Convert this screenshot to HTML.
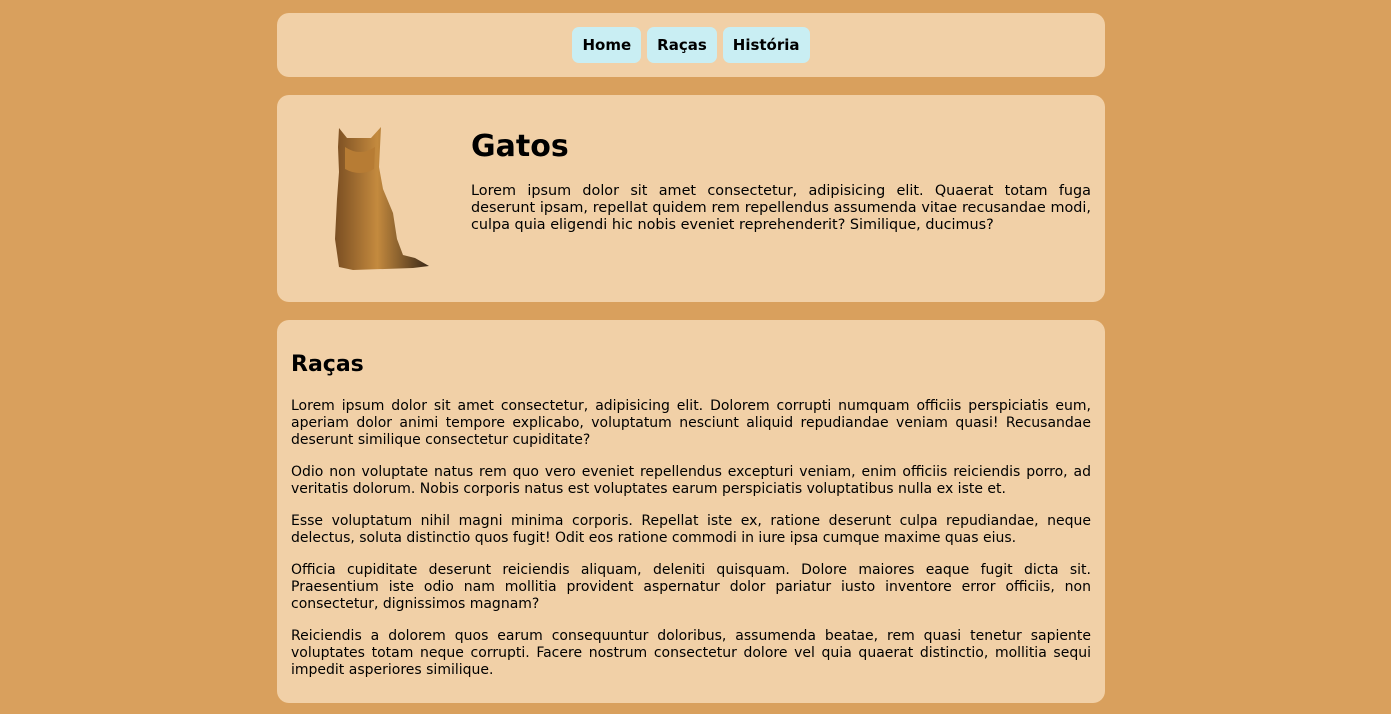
<!DOCTYPE html>
<html><head><meta charset="utf-8"><style>
body{margin:0;background:#d9a05d;font-family:"DejaVu Sans",sans-serif;color:#000;}
.wrap{width:828px;margin-left:277px;padding-top:13px;}
.box{background:#f1d0a7;border-radius:12px;}
nav{height:64px;display:flex;justify-content:center;align-items:center;gap:6px;}
nav a{background:#c9eef3;border-radius:7px;padding:0 10px;height:36px;line-height:37px;font-weight:bold;font-size:15px;text-decoration:none;color:#000;}
.hero{margin-top:18px;height:207px;position:relative;}
.hero svg{position:absolute;left:56px;top:32px;}
.hero .t{position:absolute;left:194px;right:14px;top:34px;}
h1{margin:0;font-size:30px;line-height:36px;}
p{margin:0;font-size:14px;line-height:17px;text-align:justify;}
.hero p{margin-top:18px;font-size:14.4px;}
.sec{margin-top:18px;padding:30px 14px 24px;}
h2{margin:0 0 18px;font-size:22px;line-height:30px;}
.sec p{margin-bottom:15px;}
.sec p:last-child{margin-bottom:0}
</style></head><body><div class="wrap">
<nav class="box"><a>Home</a><a>Raças</a><a>História</a></nav>
<div class="box hero">
<svg width="100" height="145" viewBox="0 0 100 145"><defs><linearGradient id="g" x1="0" x2="1"><stop offset="0" stop-color="#7a4e22"/><stop offset=".45" stop-color="#c48a3e"/><stop offset="1" stop-color="#3a2818"/></linearGradient></defs>
<path d="M6 1 L14 11 L38 11 L48 0 L47 20 L46 40 L50 62 L60 86 L64 112 L70 128 L82 131 L96 139 L80 141 L20 143 L6 140 L2 112 L4 72 L6 45 L5 20 Z" fill="url(#g)"/>
<path d="M12 20 Q27 30 42 20 L41 42 Q27 50 12 42Z" fill="#b77c34"/></svg>
<div class="t"><h1>Gatos</h1><p>Lorem ipsum dolor sit amet consectetur, adipisicing elit. Quaerat totam fuga deserunt ipsam, repellat quidem rem repellendus assumenda vitae recusandae modi, culpa quia eligendi hic nobis eveniet reprehenderit? Similique, ducimus?</p></div>
</div>
<div class="box sec"><h2>Raças</h2>
<p>Lorem ipsum dolor sit amet consectetur, adipisicing elit. Dolorem corrupti numquam officiis perspiciatis eum, aperiam dolor animi tempore explicabo, voluptatum nesciunt aliquid repudiandae veniam quasi! Recusandae deserunt similique consectetur cupiditate?</p>
<p>Odio non voluptate natus rem quo vero eveniet repellendus excepturi veniam, enim officiis reiciendis porro, ad veritatis dolorum. Nobis corporis natus est voluptates earum perspiciatis voluptatibus nulla ex iste et.</p>
<p>Esse voluptatum nihil magni minima corporis. Repellat iste ex, ratione deserunt culpa repudiandae, neque delectus, soluta distinctio quos fugit! Odit eos ratione commodi in iure ipsa cumque maxime quas eius.</p>
<p>Officia cupiditate deserunt reiciendis aliquam, deleniti quisquam. Dolore maiores eaque fugit dicta sit. Praesentium iste odio nam mollitia provident aspernatur dolor pariatur iusto inventore error officiis, non consectetur, dignissimos magnam?</p>
<p>Reiciendis a dolorem quos earum consequuntur doloribus, assumenda beatae, rem quasi tenetur sapiente voluptates totam neque corrupti. Facere nostrum consectetur dolore vel quia quaerat distinctio, mollitia sequi impedit asperiores similique.</p>
</div></div></body></html>
